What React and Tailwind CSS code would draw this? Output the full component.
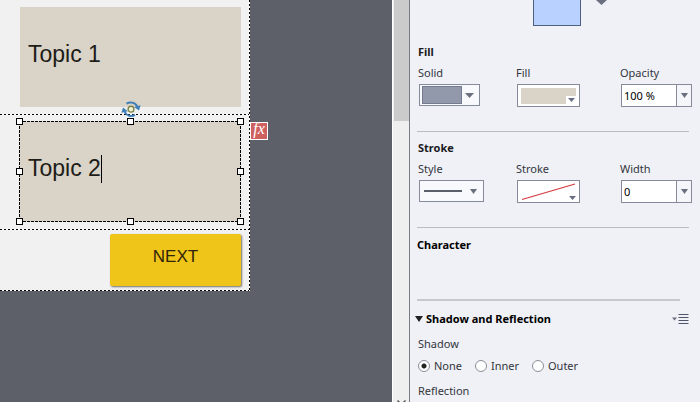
import React, { useState } from 'react'

const HANDLES = [
  { id: 'nw', pos: 'left-0 top-0' },
  { id: 'n', pos: 'left-1/2 top-0' },
  { id: 'ne', pos: 'left-full top-0' },
  { id: 'w', pos: 'left-0 top-1/2' },
  { id: 'e', pos: 'left-full top-1/2' },
  { id: 'sw', pos: 'left-0 top-full' },
  { id: 's', pos: 'left-1/2 top-full' },
  { id: 'se', pos: 'left-full top-full' },
]

const SHADOWS = ['None', 'Inner', 'Outer']

// dotted rules between slide rows and round the slide
const DOTS_X = 'h-px shrink-0 bg-[repeating-linear-gradient(90deg,#000_0_2px,#fff_2px_4px)]'
const DOTS_Y = 'w-px shrink-0 bg-[repeating-linear-gradient(180deg,#000_0_2px,#fff_2px_4px)]'

// longer dashes for the selected box
const DASH_X = 'h-px bg-[repeating-linear-gradient(90deg,#000_0_3px,#e8e4dc_3px_4px)]'
const DASH_Y = 'w-px bg-[repeating-linear-gradient(180deg,#000_0_3px,#e8e4dc_3px_4px)]'

function Caret({ className = 'h-[5px] w-[9px]' }) {
  return (
    <svg viewBox="0 0 10 5" preserveAspectRatio="none" className={className} aria-hidden="true">
      <path d="M0 0h10L5 5z" fill="#6b7080" />
    </svg>
  )
}

function RotateHandle() {
  return (
    <svg width="20" height="16" viewBox="0 0 20 16" fill="none" className="absolute left-1/2 -top-5 -ml-[9px]">
      <path d="M5.500 2.600C9 .6 14.200 1 16.200 5.500" stroke="#3f7fb8" strokeWidth="2" />
      <path d="M13 6 19.600 4.200 18 9.500z" fill="#3f7fb8" />
      <path d="M14 13.800C10.500 15.800 5.400 15.200 3.600 10.500" stroke="#3f7fb8" strokeWidth="2" />
      <path d="M.3 11.700 2.100 6.500 6.800 10.200z" fill="#3f7fb8" />
      <circle cx="10" cy="8.200" r="2.900" fill="#f2f2d8" stroke="#7b8248" strokeWidth="1.400" />
    </svg>
  )
}

function Selection() {
  return (
    <>
      <div className="pointer-events-none absolute inset-0 flex flex-col">
        <div className={DASH_X} />
        <div className="flex flex-1 justify-between">
          <div className={DASH_Y} />
          <div className={DASH_Y} />
        </div>
        <div className={DASH_X} />
      </div>
      <div className="absolute top-0 right-px bottom-px left-0">
        {HANDLES.map((h) => (
          <span key={h.id} className={`absolute -mt-[3px] -ml-[3px] size-[7px] border border-black bg-white ${h.pos}`} />
        ))}
      </div>
      <RotateHandle />
    </>
  )
}

function Slide() {
  return (
    <div className="flex w-[250px] shrink-0 self-start bg-[#f1f1f1]">
      <div className="flex flex-1 flex-col">
        <div className="pt-[7px] pr-2 pb-[7px] pl-5">
          <div className="flex h-[100px] items-center bg-[#d9d3c8] px-2 pb-[6px] text-[23px] text-[#1d1c17]">Topic 1</div>
        </div>
        <div className={DOTS_X} />
        <div className="pt-[6px] pr-2 pb-[7px] pl-[19px]">
          <div className="relative flex h-[101px] items-center bg-[#d9d3c8] px-[9px] pb-[6px] text-[23px] text-[#1d1c17]">
            Topic 2
            <span className="h-7 w-px bg-black" />
            <Selection />
            <span className="absolute top-px left-full ml-[9px] flex size-[18px] items-center justify-center border border-white bg-[#cf6060] pb-1 font-['Liberation_Serif',serif] text-[16px] leading-4 text-white italic">
              fx
            </span>
          </div>
        </div>
        <div className={DOTS_X} />
        <div className="flex justify-end pt-1 pr-2 pb-1">
          <button
            type="button"
            className="h-[52px] w-[131px] rounded-xs bg-[#efc519] pb-[6px] text-[17px] text-[#30240a] shadow-[1px_1px_2px_#0008]"
          >
            NEXT
          </button>
        </div>
        <div className={DOTS_X} />
      </div>
      <div className={DOTS_Y} />
    </div>
  )
}

function Scrollbar() {
  return (
    <div className="flex w-[18px] shrink-0 flex-col items-center border-r border-l border-r-[#777b86] border-l-white bg-[#efefef]">
      <div className="h-[121px] w-[15px] bg-[#cbcbcb]" />
      <svg width="9" height="5" viewBox="0 0 9 5" fill="none" className="mt-auto -mb-[3px]">
        <path d="M.5.5l4 4 4-4" stroke="#555" strokeWidth="1.500" />
      </svg>
    </div>
  )
}

function Field({ id, label, children }) {
  return (
    <div className="flex flex-col items-start gap-[3px]">
      <label htmlFor={id} className="-ml-px leading-4">{label}</label>
      {children}
    </div>
  )
}

function NumberCombo({ id, value, onChange }) {
  return (
    <div className="flex h-[23px] w-[71px] border border-[#858b9b] bg-white">
      <input
        id={id}
        value={value}
        onChange={(e) => onChange(e.target.value)}
        className="w-0 min-w-0 flex-1 px-[2px] text-black outline-none"
      />
      <button type="button" aria-label="Pick a value" className="flex w-[15px] items-center justify-center border-l border-[#858b9b] bg-[#f4f6fa]">
        <Caret className="h-[5px] w-[7px]" />
      </button>
    </div>
  )
}

function Properties() {
  const [opacity, setOpacity] = useState('100 %')
  const [width, setWidth] = useState('0')
  const [shadow, setShadow] = useState('None')

  return (
    <aside className="flex w-[290px] shrink-0 flex-col overflow-hidden bg-[#eff1f6] pr-2 pl-[7px] text-[#33353c]">
      <div className="flex h-[26px] shrink-0 items-start pl-[116px]">
        <button type="button" aria-label="Object style" className="h-[26px] w-12 border border-t-0 border-[#4f5f80] bg-[#b9d1fe]" />
        <Caret className="ml-[15px] h-[5px] w-[11px]" />
      </div>

      <section className="mt-[18px] mr-[3px] border-b border-[#b9bbc3] pb-[24px] pl-[2px]">
        <h2 className="-ml-px font-bold text-[#1b1b1e]">Fill</h2>
        <div className="mt-[5px] grid grid-cols-[98px_104px_71px]">
          <Field id="fill-type" label="Solid">
            <button id="fill-type" type="button" className="flex h-[22px] w-[61px] items-center justify-between border border-[#858b9b] bg-[#f8f9fc] px-[2px]">
              <span className="h-[18px] w-10 border border-[#747b90] bg-[#9199ab]" />
              <Caret className="mr-[3px] h-[5px] w-[9px]" />
            </button>
          </Field>
          <Field id="fill-color" label="Fill">
            <button id="fill-color" type="button" className="flex h-[23px] w-[63px] border border-[#858b9b] bg-white p-[3px]">
              <span className="flex h-4 flex-1 items-end justify-end bg-[#d9d3c8]">
                <span className="flex h-2 w-[10px] items-center justify-center bg-white">
                  <Caret className="h-1 w-[7px]" />
                </span>
              </span>
            </button>
          </Field>
          <Field id="opacity" label="Opacity">
            <NumberCombo id="opacity" value={opacity} onChange={setOpacity} />
          </Field>
        </div>
      </section>

      <section className="mt-2 mr-[3px] border-b border-[#b9bbc3] pb-[24px] pl-[2px]">
        <h2 className="-ml-px font-bold text-[#1b1b1e]">Stroke</h2>
        <div className="mt-[5px] grid grid-cols-[98px_104px_71px]">
          <Field id="stroke-style" label="Style">
            <button id="stroke-style" type="button" className="flex h-[22px] w-[65px] items-center justify-between border border-[#858b9b] bg-[#f8f9fc] px-1">
              <span className="h-[2px] w-[38px] bg-[#5b5f6b]" />
              <Caret className="mr-[2px] h-[5px] w-[7px]" />
            </button>
          </Field>
          <Field id="stroke-color" label="Stroke">
            <button id="stroke-color" type="button" aria-label="No stroke" className="border border-[#858b9b] bg-white">
              <svg width="61" height="21" viewBox="0 0 61 21" className="block">
                <path d="M4 18.500 57 3" stroke="#d2393f" strokeWidth="1.200" />
                <path d="M51 15h7l-3.500 4z" fill="#6b7080" />
              </svg>
            </button>
          </Field>
          <Field id="stroke-width" label="Width">
            <NumberCombo id="stroke-width" value={width} onChange={setWidth} />
          </Field>
        </div>
      </section>

      <section className="mt-[9px] mr-3 h-[64px] border-b-2 border-[#c6c8cd]">
        <h2 className="font-bold text-black">Character</h2>
      </section>

      <section className="mt-[10px]">
        <div className="-ml-[2px] flex items-center">
          <svg width="8" height="6" viewBox="0 0 8 6" className="mr-[3px]">
            <path d="M0 0h8L4 6z" fill="#222" />
          </svg>
          <h2 className="font-bold text-black">Shadow and Reflection</h2>
          <button type="button" aria-label="Section menu" className="mr-[3px] ml-auto">
            <svg width="17" height="11" viewBox="0 0 17 11" className="block">
              <path d="M0 3.500h5L2.500 6.500z" fill="#6b7080" />
              <path d="M6.500 .5h10M6.500 3.500h10M6.500 6.500h10M6.500 9.500h10" stroke="#50566a" />
            </svg>
          </button>
        </div>
        <fieldset className="mt-[9px] pl-[1px]">
          <legend>Shadow</legend>
          <div className="mt-[6px] grid grid-cols-[57px_57px_57px]">
            {SHADOWS.map((s) => (
              <label key={s} className="flex items-center gap-1">
                <input
                  type="radio"
                  name="shadow"
                  checked={shadow === s}
                  onChange={() => setShadow(s)}
                  className="size-3 shrink-0 appearance-none rounded-full border border-[#8b8e98] bg-white checked:bg-[radial-gradient(circle,#222_0_2px,#fff_3px)]"
                />
                {s}
              </label>
            ))}
          </div>
        </fieldset>
        <h3 className="mt-[9px] pl-[1px]">Reflection</h3>
      </section>
    </aside>
  )
}

export default function App() {
  return (
    <div className="flex h-screen overflow-hidden bg-[#5d6069] font-['Liberation_Sans',Arial,sans-serif]">
      <main className="flex min-w-0 flex-1">
        <Slide />
      </main>
      <Scrollbar />
      <div className="flex font-['Noto_Sans',sans-serif] text-[11px] leading-4">
        <Properties />
      </div>
    </div>
  )
}
